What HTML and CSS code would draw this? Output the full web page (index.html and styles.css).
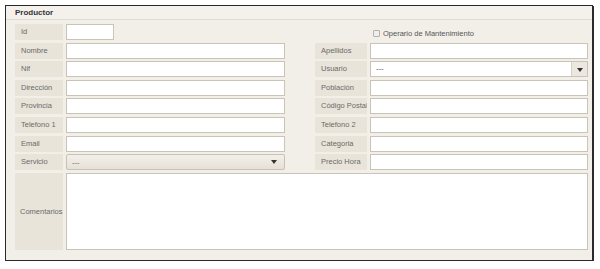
FILE: index.html
```html
<!DOCTYPE html>
<html lang="es">
<head>
  <meta charset="UTF-8" />
  <title>Productor</title>
  <link rel="stylesheet" href="styles.css">
</head>
<body>

  <div class="panel">
    <div class="panel-title">Productor</div>

    <div class="form">
      <label class="lbl">Id</label>
      <input class="txt short" type="text" />
      <div class="check-cell">
        <span class="check"></span>
        <span>Operario de Mantenimiento</span>
      </div>

      <label class="lbl">Nombre</label>
      <input class="txt" type="text" />
      <label class="lbl right">Apellidos</label>
      <input class="txt" type="text" />

      <label class="lbl">Nif</label>
      <input class="txt" type="text" />
      <label class="lbl right">Usuario</label>
      <div class="combo">
        <span class="combo-text">---</span>
        <span class="combo-btn"></span>
      </div>

      <label class="lbl">Dirección</label>
      <input class="txt" type="text" />
      <label class="lbl right">Población</label>
      <input class="txt" type="text" />

      <label class="lbl">Provincia</label>
      <input class="txt" type="text" />
      <label class="lbl right">Código Postal</label>
      <input class="txt" type="text" />

      <label class="lbl">Telefono 1</label>
      <input class="txt" type="text" />
      <label class="lbl right">Telefono 2</label>
      <input class="txt" type="text" />

      <label class="lbl">Email</label>
      <input class="txt" type="text" />
      <label class="lbl right">Categoria</label>
      <input class="txt" type="text" />

      <label class="lbl">Servicio</label>
      <div class="dropdown">
        <span>---</span>
        <span class="arrow"></span>
      </div>
      <label class="lbl right">Precio Hora</label>
      <input class="txt" type="text" />

      <label class="lbl tall">Comentarios</label>
      <textarea class="memo"></textarea>
    </div>
  </div>

</body>
</html>
```

FILE: styles.css
```css
* {
  box-sizing: border-box;
  font-family: 'Liberation Sans', Arial, sans-serif;
}
body {
  margin: 0;
  padding: 5px 0 0 5px;
  background: #ffffff;
}
.panel {
  width: 588px;
  height: 256px;
  background: #f2efe9;
  border: 1px solid #2a2a2a;
  box-shadow: 1px 1px 0 #2a2a2a;
}
.panel-title {
  height: 14px;
  padding: 2px 0 0 9px;
  font-size: 8px;
  font-weight: bold;
  color: #333;
  border-bottom: 1px solid #e0dbd0;
  background: #f4f1ec;
}
.form {
  display: grid;
  grid-template-columns: 48px 219px 79px 218px;
  grid-auto-rows: 16px;
  column-gap: 3px;
  row-gap: 2.6px;
  padding: 4px 0 0 9px;
}
.lbl {
  background: #e9e4da;
  color: #6a6a6a;
  font-size: 7.5px;
  line-height: 16px;
  padding-left: 6px;
  white-space: nowrap;
  overflow: hidden;
}
.lbl.right {
  margin-left: 27px;
  padding-left: 6px;
}
.lbl.tall {
  height: 77px;
  line-height: 77px;
  padding-left: 5px;
}
.txt {
  height: 16px;
  border: 1px solid #cac4b8;
  background: #fff;
  margin: 0;
  padding: 0 4px;
  font-size: 7.5px;
}
.txt.short {
  width: 48px;
}
.check-cell {
  grid-column: 3 / 5;
  display: flex;
  align-items: center;
  gap: 3px;
  padding-left: 85px;
  padding-top: 2px;
  font-size: 7.5px;
  color: #555;
}
.check {
  width: 7px;
  height: 7px;
  border: 1px solid #b5b0a8;
  background: #eeeeee;
  border-radius: 1px;
}
.combo {
  display: flex;
  height: 16px;
  border: 1px solid #cac4b8;
  background: #fff;
  font-size: 7.5px;
  color: #555;
}
.combo-text {
  flex: 1;
  line-height: 14px;
  padding-left: 5px;
}
.combo-btn {
  width: 16px;
  background: #ece8e0;
  border-left: 1px solid #d8d2c6;
  position: relative;
}
.combo-btn::after,
.arrow::after {
  content: "";
  position: absolute;
  left: 5px;
  top: 6px;
  border-left: 3px solid transparent;
  border-right: 3px solid transparent;
  border-top: 4px solid #333;
}
.dropdown {
  display: flex;
  justify-content: space-between;
  align-items: center;
  height: 16px;
  border: 1px solid #c8c2b5;
  border-radius: 2px;
  background: linear-gradient(to bottom, #f3f0ea, #e6e1d7);
  padding: 0 5px;
  font-size: 7.5px;
  color: #666;
}
.arrow {
  position: relative;
  width: 10px;
  height: 14px;
}
.arrow::after {
  left: 2px;
  top: 5px;
}
.memo {
  grid-column: 2 / 5;
  height: 77px;
  margin: 0;
  border: 1px solid #cac4b8;
  background: #fff;
  resize: none;
}
```
